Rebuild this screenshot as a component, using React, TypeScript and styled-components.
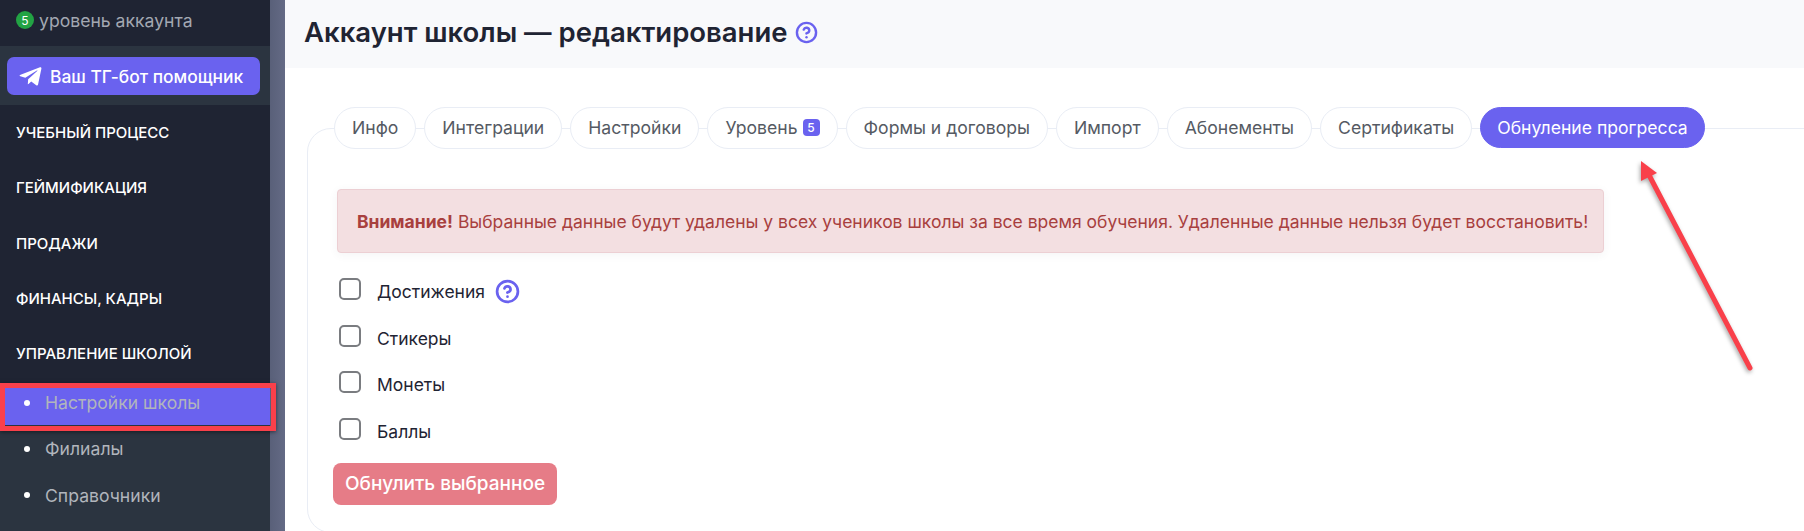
import React from "react";
import styled, { createGlobalStyle } from "styled-components";
import { FaTelegramPlane } from "react-icons/fa";
import { CircleHelp } from "lucide-react";

const GlobalStyle = createGlobalStyle`
  html, body {
    margin: 0;
    padding: 0;
    background: #fff;
    font-family: Inter, "Noto Sans", sans-serif;
  }
  * { box-sizing: border-box; }
`;

const Page = styled.div`
  position: relative;
  display: flex;
  width: 1804px;
  height: 531px;
  overflow: hidden;
`;

const Sidebar = styled.aside`
  position: relative;
  flex: 0 0 270px;
  display: flex;
  flex-direction: column;
  background: #1f2433;
`;

const ScrollTrack = styled.div`
  flex: 0 0 15px;
  background: linear-gradient(90deg, #596079, #646a85);
`;

const LevelRow = styled.div`
  display: flex;
  align-items: center;
  gap: 5px;
  height: 46px;
  padding: 0 0 6px 16px;
  color: #a3a8b2;
  font-size: 17.6px;
`;

const LevelBadge = styled.span`
  display: flex;
  align-items: center;
  justify-content: center;
  width: 18px;
  height: 18px;
  border-radius: 50%;
  background: #22a344;
  color: #fff;
  font-size: 12px;
`;

const BotSection = styled.div`
  height: 59px;
  padding: 11px 10px 0 7px;
  background: #2b3440;
`;

const BotButton = styled.button`
  display: flex;
  align-items: center;
  gap: 7px;
  width: 100%;
  height: 38px;
  padding: 0 0 0 11px;
  border: 0;
  border-radius: 7px;
  background: #6a62ef;
  color: #fff;
  font-family: inherit;
  font-size: 17.4px;
  font-weight: 500;
`;

const NavGroup = styled.div`
  display: flex;
  align-items: center;
  height: 55.3px;
  padding-left: 16px;
  color: #fff;
  font-size: 15px;
  font-weight: 500;
  text-transform: uppercase;
`;

const NavList = styled.ul`
  flex: 1;
  margin: 2px 0 0;
  padding: 0;
  list-style: none;
  background: #2b3440;
`;

const NavItem = styled.li<{ $active?: boolean }>`
  display: flex;
  align-items: center;
  gap: 15px;
  height: ${(props) => (props.$active ? "42px" : "46.5px")};
  padding: 0 0 ${(props) => (props.$active ? "3px" : "0")} 24px;
  background: ${(props) => (props.$active ? "#6a62ef" : "transparent")};
  color: #b1b5bc;
  font-size: 17.6px;
  &::before {
    content: "";
    width: 6px;
    height: 6px;
    border-radius: 50%;
    background: #fff;
  }
`;

const NavHighlight = styled.div`
  position: absolute;
  top: 383px;
  left: 0;
  width: 276px;
  height: 48px;
  border: 5px solid #f9404a;
  box-shadow: 0 1px 4px rgba(0, 0, 0, 0.5);
`;

const Main = styled.main`
  flex: 1;
  min-width: 0;
  display: flex;
  flex-direction: column;
`;

const Header = styled.header`
  display: flex;
  align-items: center;
  gap: 7px;
  flex: 0 0 68px;
  padding: 0 0 4px 19px;
  background: #f8f9fb;
`;

const Title = styled.h1`
  margin: 0;
  color: #1f2433;
  font-size: 27.5px;
  font-weight: 600;
`;

const HelpIcon = styled(CircleHelp)`
  flex: none;
  color: #6a62ef;
`;

const Card = styled.section`
  flex: none;
  width: 1600px;
  height: 405px;
  margin: 60px 0 0 22px;
  padding: 0 0 0 26px;
  border: 1px solid #e9edf5;
  border-radius: 24px;
`;

const TabRow = styled.nav`
  display: flex;
  align-items: flex-start;
  gap: 8px;
  margin: -22px 0 0 0;
`;

const Tab = styled.div<{ $active?: boolean }>`
  display: flex;
  align-items: center;
  gap: 5px;
  height: ${(props) => (props.$active ? "41px" : "42px")};
  padding: 0 ${(props) => (props.$active ? "16px" : "17px")} 1px;
  border: 1px solid ${(props) => (props.$active ? "#6a62ef" : "#e9edf5")};
  border-radius: 21px;
  background: ${(props) => (props.$active ? "#6a62ef" : "#fff")};
  color: ${(props) => (props.$active ? "#fff" : "#555a63")};
  font-size: 17.6px;
`;

const TabBadge = styled.span`
  display: flex;
  align-items: center;
  justify-content: center;
  width: 17px;
  height: 17px;
  border-radius: 4px;
  background: #6a62ef;
  color: #fff;
  font-size: 12px;
  font-weight: 500;
`;

const Alert = styled.div`
  display: flex;
  align-items: center;
  width: 1267px;
  height: 64px;
  margin: 40px 0 0 3px;
  padding-left: 19px;
  border: 1px solid #eccfd3;
  border-radius: 4px;
  background: #f3dfe1;
  box-shadow: 0 2px 10px rgba(60, 60, 80, 0.06);
  color: #a8403e;
  font-size: 17.5px;
  strong {
    margin-right: 5px;
  }
`;

const CheckList = styled.div`
  display: flex;
  flex-direction: column;
  gap: 24.5px;
  margin: 25px 0 0 5px;
`;

const CheckRow = styled.label`
  display: flex;
  align-items: center;
  height: 22px;
  color: #1f2433;
  font-size: 17.5px;
`;

const CheckBox = styled.span`
  flex: none;
  width: 22px;
  height: 22px;
  margin-right: 16px;
  border: 2px solid #7a7c80;
  border-radius: 5px;
  background: #fff;
`;

const CheckText = styled.span`
  display: flex;
  align-items: center;
  margin-top: 5px;
`;

const RowHelp = styled(CircleHelp)`
  flex: none;
  margin-left: 10px;
  color: #6a62ef;
`;

const ResetButton = styled.button`
  display: block;
  height: 42px;
  margin: 23px 0 0 -1px;
  padding: 0 12px;
  border: 0;
  border-radius: 8px;
  background: #e67c87;
  color: #fff;
  font-family: inherit;
  font-size: 19px;
  font-weight: 500;
`;

const Arrow = styled.svg`
  position: absolute;
  top: 0;
  left: 0;
  pointer-events: none;
  filter: drop-shadow(-1px 2px 2px rgba(0, 0, 0, 0.35));
`;

const tabs = [
  "Инфо",
  "Интеграции",
  "Настройки",
  "Уровень",
  "Формы и договоры",
  "Импорт",
  "Абонементы",
  "Сертификаты",
  "Обнуление прогресса"
];

const groups = [
  "Учебный процесс",
  "Геймификация",
  "Продажи",
  "Финансы, кадры",
  "Управление школой"
];

const options = ["Достижения", "Стикеры", "Монеты", "Баллы"];

const App = () => {
  return (
    <>
      <GlobalStyle />
      <Page>
        <Sidebar>
          <LevelRow>
            <LevelBadge>5</LevelBadge>
            уровень аккаунта
          </LevelRow>
          <BotSection>
            <BotButton>
              <FaTelegramPlane size={25} />
              Ваш ТГ-бот помощник
            </BotButton>
          </BotSection>
          {groups.map((group) => (
            <NavGroup key={group}>{group}</NavGroup>
          ))}
          <NavList>
            <NavItem $active>Настройки школы</NavItem>
            <NavItem>Филиалы</NavItem>
            <NavItem>Справочники</NavItem>
          </NavList>
          <NavHighlight />
        </Sidebar>
        <ScrollTrack />
        <Main>
          <Header>
            <Title>Аккаунт школы — редактирование</Title>
            <HelpIcon size={23} strokeWidth={2.5} />
          </Header>
          <Card>
            <TabRow>
              {tabs.map((tab) => (
                <Tab key={tab} $active={tab === "Обнуление прогресса"}>
                  {tab}
                  {tab === "Уровень" && <TabBadge>5</TabBadge>}
                </Tab>
              ))}
            </TabRow>
            <Alert>
              <strong>Внимание!</strong>
              Выбранные данные будут удалены у всех учеников школы за все время
              обучения. Удаленные данные нельзя будет восстановить!
            </Alert>
            <CheckList>
              {options.map((option) => (
                <CheckRow key={option}>
                  <CheckBox />
                  <CheckText>
                    {option}
                    {option === "Достижения" && (
                      <RowHelp size={25} strokeWidth={2.6} />
                    )}
                  </CheckText>
                </CheckRow>
              ))}
            </CheckList>
            <ResetButton>Обнулить выбранное</ResetButton>
          </Card>
        </Main>
        <Arrow width="1804" height="531" viewBox="0 0 1804 531">
          <line x1="1750" y1="368" x2="1649" y2="175" stroke="#f9404a" strokeWidth="5" strokeLinecap="round" />
          <polygon points="1641,161 1657,173 1641,181" fill="#f9404a" />
        </Arrow>
      </Page>
    </>
  );
};

export default App;
